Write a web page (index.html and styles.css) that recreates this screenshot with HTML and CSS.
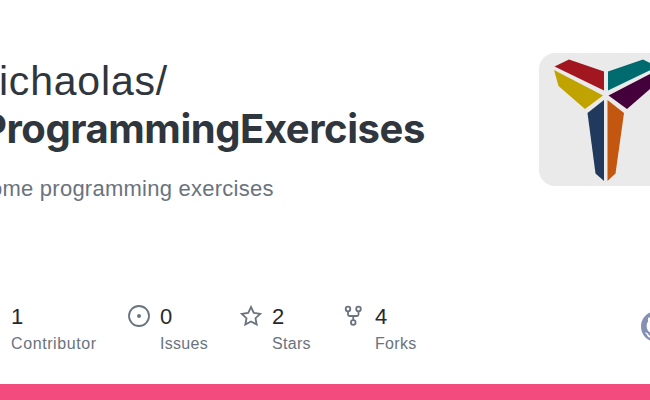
FILE: index.html
```
<!DOCTYPE html>
<html lang="en">
<head>
<meta charset="UTF-8">
<meta name="viewport" content="width=device-width, initial-scale=1.0">
<title>michaolas/ProgrammingExercises</title>
<link rel="stylesheet" href="styles.css">
</head>
<body>
  <div class="card">
    <div class="top">
      <div class="info">
        <h1><span class="owner">michaolas/</span><span class="repo">ProgrammingExercises</span></h1>
        <p class="description">Some programming exercises</p>
      </div>
      <svg class="avatar" viewBox="0 0 133 133">
        <rect width="133" height="133" fill="#eaeaea"/>
        <path fill="#a2171f" d="M15.500 13.500L30 6.500L65 18.500V37.500Z"/>
        <path fill="#c1a300" d="M15 17L64 42.500L46 56L19.500 33Z"/>
        <path fill="#006b6e" d="M69 18.500L104 6.500L118.500 13.500L69 37.500Z"/>
        <path fill="#43003b" d="M69.500 42.500L118.500 17L114.500 33L88 56Z"/>
        <path fill="#20395d" d="M65 47V128L56.500 120.500L48.500 60Z"/>
        <path fill="#c45710" d="M68.500 47L85 60L76.500 120.500L68.500 128Z"/>
      </svg>
    </div>

    <div class="bottom">
      <div class="stats">
        <div class="stat contributors">
          <svg class="icon" viewBox="0 0 16 16"><path d="M2 5.500a3.500 3.500 0 1 1 5.898 2.549 5.508 5.508 0 0 1 3.034 4.084.75.75 0 1 1-1.482.235 4 4 0 0 0-7.9 0 .75.75 0 0 1-1.482-.236A5.507 5.507 0 0 1 3.102 8.050 3.493 3.493 0 0 1 2 5.500Z"/></svg>
          <div><div class="count">1</div><div class="label">Contributor</div></div>
        </div>
        <div class="stat issues">
          <svg class="icon" viewBox="0 0 24 24"><circle class="line" cx="12" cy="12" r="10"/><circle cx="12" cy="12" r="2"/></svg>
          <div><div class="count">0</div><div class="label">Issues</div></div>
        </div>
        <div class="stat stars">
          <svg class="icon" viewBox="0 0 24 24"><path class="line" d="M12 3L14.800 8.900L21.200 9.800L16.500 14.200L17.700 20.500L12 17.500L6.300 20.500L7.500 14.200L2.800 9.800L9.200 8.900Z"/></svg>
          <div><div class="count">2</div><div class="label">Stars</div></div>
        </div>
        <div class="stat forks">
          <svg class="icon" viewBox="0 0 24 24">
            <g class="line"><circle cx="6" cy="5" r="2.300"/><circle cx="16.500" cy="5" r="2.300"/><circle cx="11.250" cy="18.500" r="2.300"/><path d="M6 7.300V10.500Q6 12 7.500 12H15Q16.500 12 16.500 10.500V7.300M11.250 12V16.200"/></g>
          </svg>
          <div><div class="count">4</div><div class="label">Forks</div></div>
        </div>
      </div>
      <svg class="mark" viewBox="0 0 16 16"><path d="M8 0C3.580 0 0 3.580 0 8c0 3.540 2.290 6.530 5.470 7.590.4.070.55-.17.55-.38 0-.19-.01-.82-.01-1.490-2.010.37-2.530-.49-2.690-.94-.09-.23-.48-.94-.82-1.130-.28-.15-.68-.52-.01-.53.63-.01 1.080.58 1.230.82.72 1.210 1.870.87 2.330.66.07-.52.28-.87.51-1.070-1.780-.2-3.640-.89-3.640-3.950 0-.87.31-1.590.82-2.150-.08-.2-.36-1.020.08-2.120 0 0 .67-.21 2.200.82.64-.18 1.320-.27 2-.27s1.360.09 2 .27c1.530-1.040 2.200-.82 2.200-.82.44 1.100.16 1.920.08 2.120.51.56.82 1.270.82 2.150 0 3.070-1.870 3.750-3.650 3.950.29.25.54.73.54 1.480 0 1.070-.01 1.930-.01 2.200 0 .21.15.46.55.38A8 8 0 0 0 16 8c0-4.420-3.580-8-8-8Z"/></svg>
    </div>
    <div class="language-bar"></div>
  </div>
</body>
</html>
```

FILE: styles.css
```
body {
  margin: 0;
  overflow: hidden;
  background-color: #fff;
  font-family: "Liberation Sans", Arial, sans-serif;
}

.card {
  display: flex;
  flex-direction: column;
  box-sizing: border-box;
  width: 800px;
  height: 400px;
  margin-left: -75px;
}

.top {
  display: flex;
  justify-content: space-between;
  height: 248px;
  padding: 53px 53px 0 39px;
}

h1 {
  margin: 4px 0 0;
  color: #2f363d;
  font-size: 41px;
  line-height: 48px;
  font-weight: 400;
  white-space: nowrap;
}

h1 span {
  display: block;
}

.owner {
  letter-spacing: 0.8px;
}

.repo {
  margin-left: 17px;
  font-family: Inter, sans-serif;
  font-size: 40px;
  font-weight: 700;
  letter-spacing: -0.45px;
}

.description {
  margin: 22px 0 0 11px;
  color: #6a737d;
  font-size: 22px;
  line-height: 28px;
  letter-spacing: 0.25px;
}

.avatar {
  flex: none;
  width: 133px;
  height: 133px;
  border-radius: 16px;
}

.bottom {
  display: flex;
  align-items: flex-start;
  justify-content: space-between;
  height: 83px;
  padding: 0 53px;
}

.stats {
  display: flex;
}

.stat {
  display: flex;
  gap: 9px;
}

.contributors {
  width: 149px;
}

.contributors .label {
  letter-spacing: 0.6px;
}

.issues {
  width: 112px;
}

.stars {
  width: 103px;
}

.icon {
  width: 24px;
  height: 24px;
  margin-top: 3px;
  fill: #6a737d;
}

.line {
  fill: none;
  stroke: #6a737d;
  stroke-width: 1.8;
}

.count {
  color: #24292e;
  font-size: 22px;
  line-height: 31px;
}

.label {
  color: #6a737d;
  font-size: 16px;
  line-height: 24px;
  letter-spacing: 0.3px;
}

.mark {
  width: 31px;
  height: 31px;
  margin-top: 10px;
  fill: #8491b3;
}

.language-bar {
  height: 16px;
  background-color: #f34b7d;
}
```
